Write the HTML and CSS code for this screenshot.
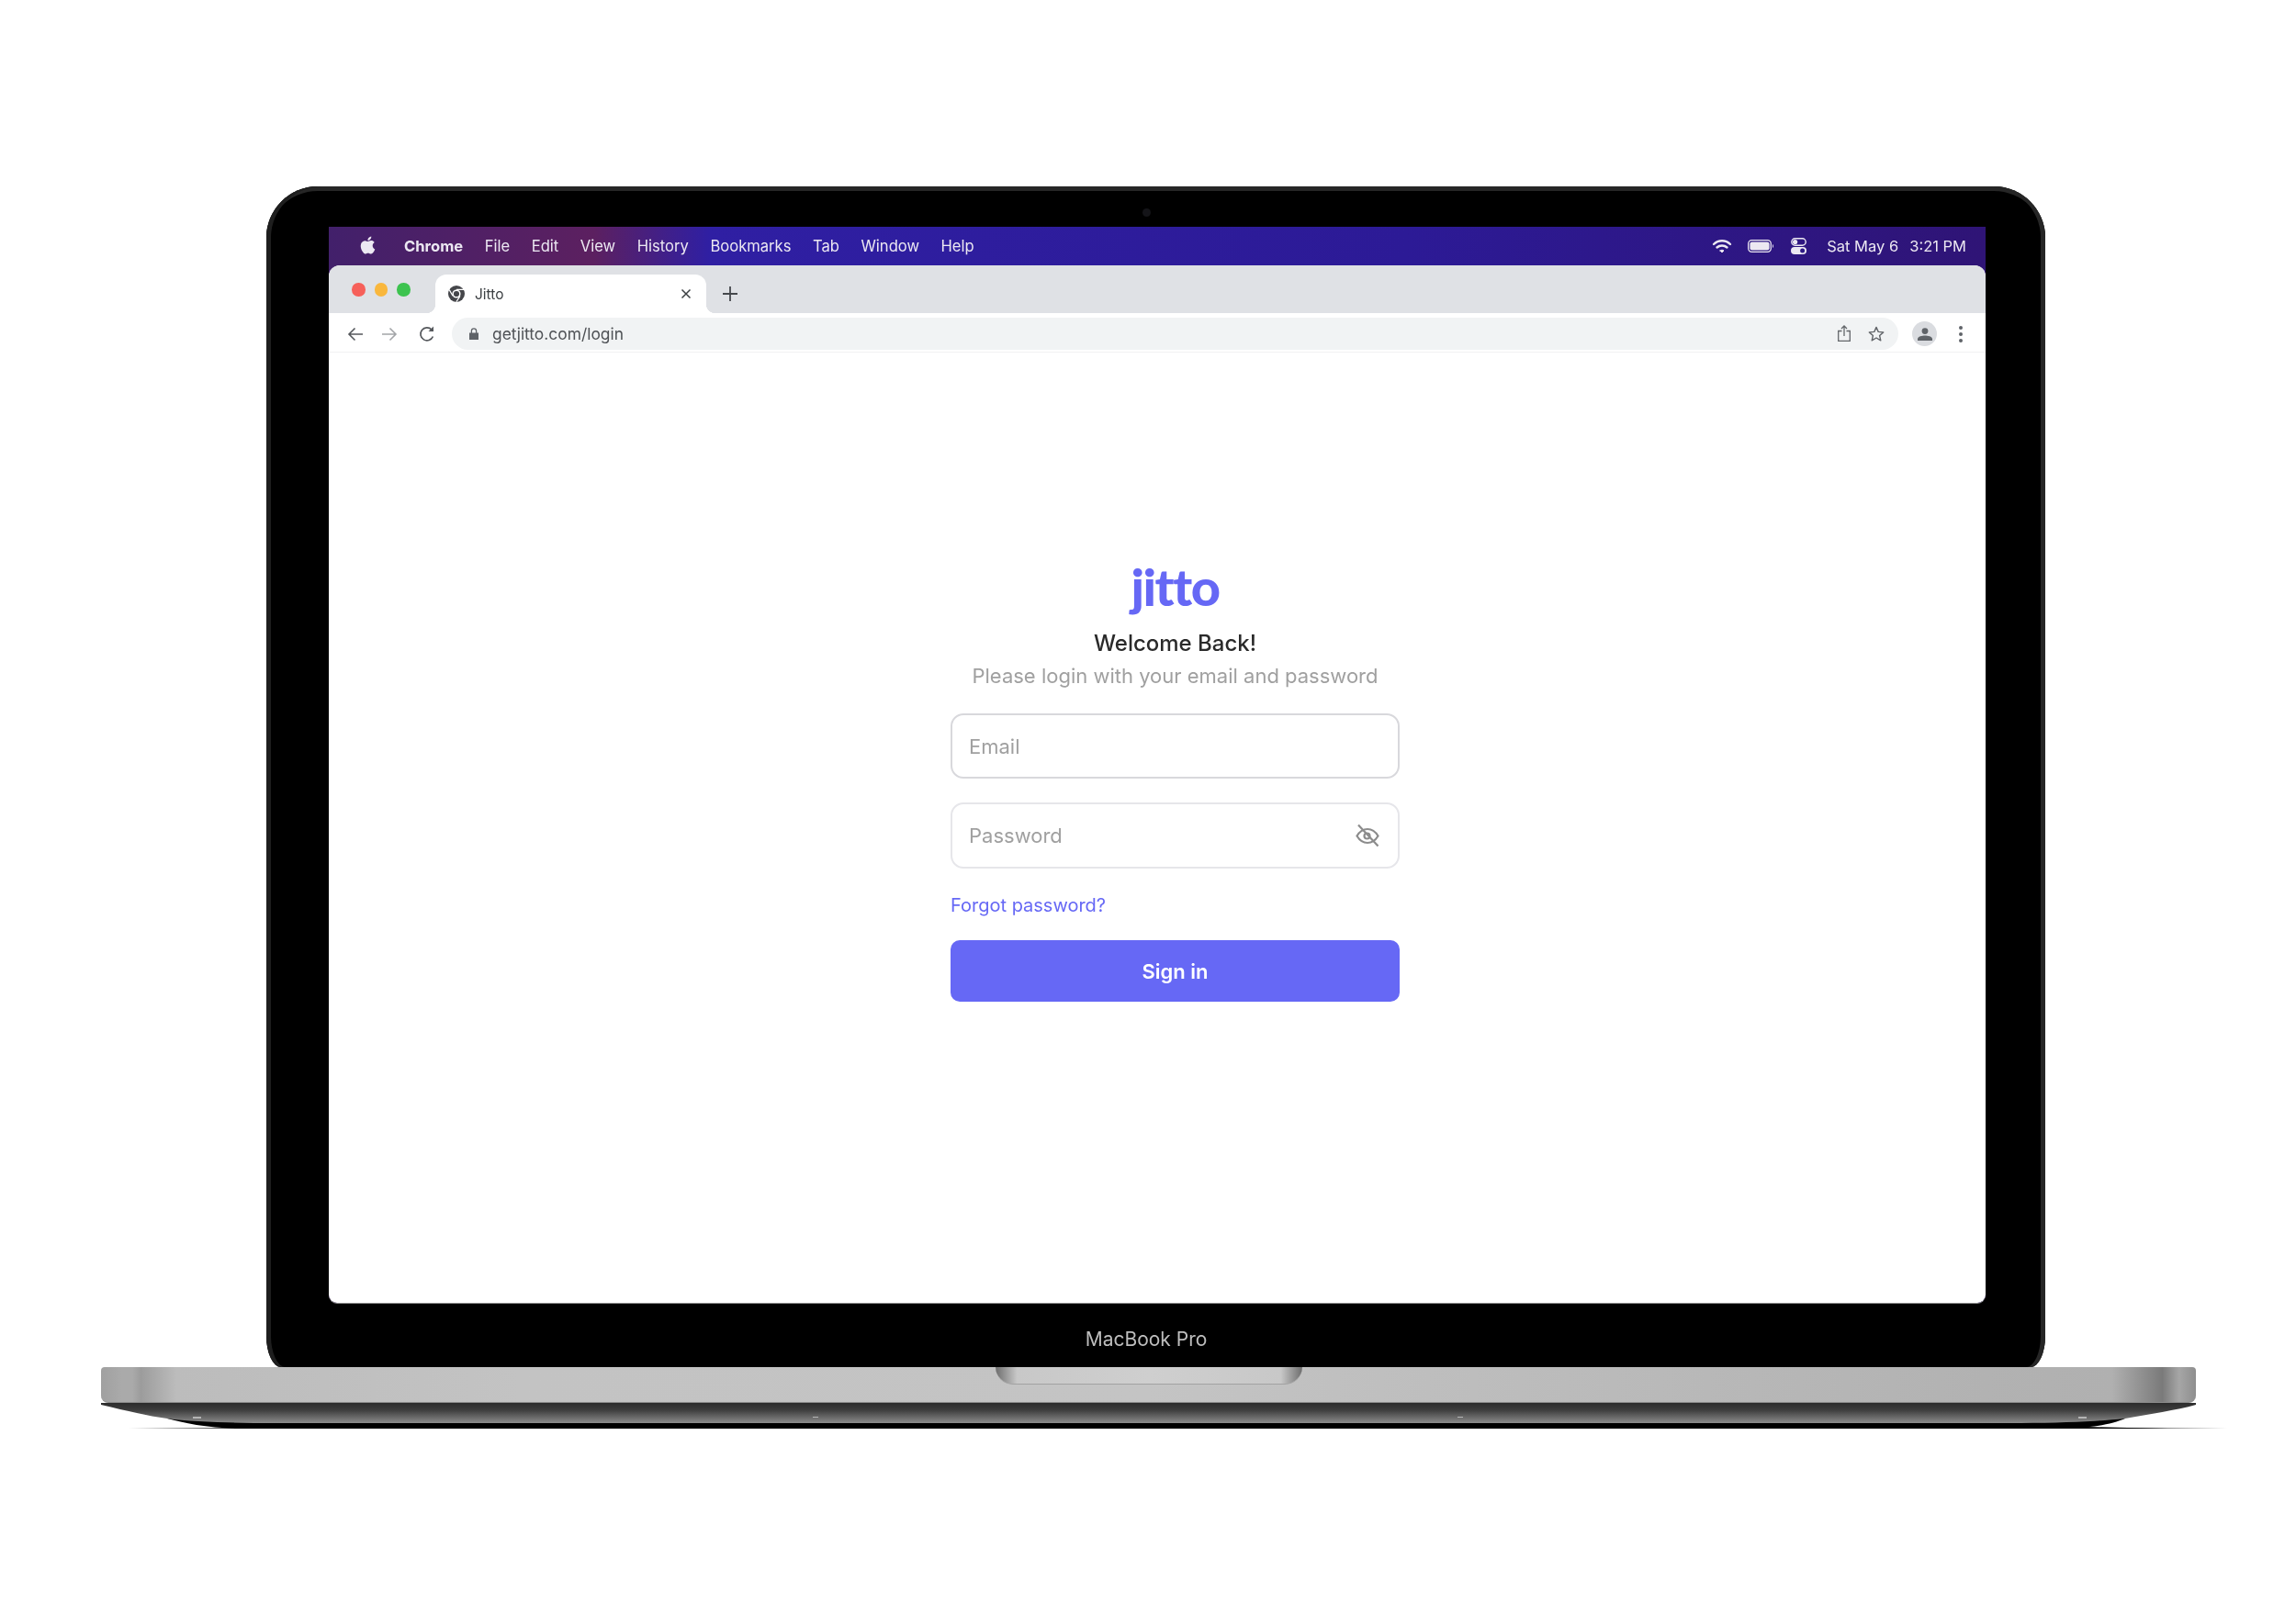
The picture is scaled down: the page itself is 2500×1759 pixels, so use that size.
FILE: index.html
```html
<!DOCTYPE html>
<html lang="en">

<head>
  <meta charset="UTF-8">
  <title>Jitto - MacBook Pro mockup</title>
  <link rel="stylesheet" href="styles.css">
</head>

<body>
  <div class="laptop">
    <div class="lid">
      <div class="camera"></div>
      <div class="screen">

        <!-- mac menu bar -->
        <div class="menubar">
          <svg class="apple" viewBox="0 0 24 24"><path d="M12.152 6.896c-.948 0-2.415-1.078-3.96-1.04-2.04.027-3.91 1.183-4.961 3.014-2.117 3.675-.546 9.103 1.519 12.09 1.013 1.454 2.208 3.09 3.792 3.039 1.52-.065 2.09-.987 3.935-.987 1.831 0 2.35.987 3.96.948 1.637-.026 2.676-1.48 3.676-2.948 1.156-1.688 1.636-3.325 1.662-3.415-.039-.013-3.182-1.221-3.22-4.857-.026-3.04 2.48-4.494 2.597-4.559-1.429-2.09-3.623-2.324-4.39-2.376-2-.156-3.675 1.09-4.61 1.09zM15.53 3.83c.843-1.012 1.4-2.427 1.245-3.83-1.207.052-2.662.805-3.532 1.818-.78.896-1.454 2.338-1.273 3.714 1.338.104 2.715-.688 3.559-1.701"/></svg>
          <ul class="menu">
            <li class="menu-app">Chrome</li>
            <li>File</li>
            <li>Edit</li>
            <li>View</li>
            <li>History</li>
            <li>Bookmarks</li>
            <li>Tab</li>
            <li>Window</li>
            <li>Help</li>
          </ul>
          <div class="status">
            <svg class="wifi" viewBox="0 0 22 17" fill="none" stroke="currentColor" stroke-width="2.4" stroke-linecap="round">
              <path d="M2 6 C7 1 15 1 20 6"/>
              <path d="M5.5 9.5 C8.5 6.8 13.5 6.8 16.5 9.5"/>
              <path d="M9 13 L11 15 L13 13 C12 12 10 12 9 13 Z" fill="currentColor" stroke-width="1"/>
            </svg>
            <svg class="battery" viewBox="0 0 29 14" fill="none">
              <rect x="0.7" y="0.7" width="24.6" height="12.6" rx="3.8" stroke="currentColor" stroke-width="1.3"/>
              <rect x="2.4" y="2.4" width="21.2" height="9.2" rx="2.4" fill="currentColor"/>
              <path d="M27 5 C28.4 5.5 28.4 8.5 27 9 Z" fill="currentColor"/>
            </svg>
            <svg class="control" viewBox="0 0 17 18" fill="none">
              <rect x="0.8" y="0.8" width="15.4" height="7.4" rx="3.7" stroke="currentColor" stroke-width="1.4"/>
              <circle cx="4.6" cy="4.5" r="2.6" fill="currentColor"/>
              <rect y="10" width="17" height="8" rx="4" fill="currentColor"/>
              <circle cx="12.6" cy="14" r="2.5" fill="#2e1a86"/>
            </svg>
            <span class="clock-date">Sat May 6</span>
            <span>3:21 PM</span>
          </div>
        </div>

        <div class="browser">
          <!-- tabs -->
          <div class="tabstrip">
            <div class="traffic">
              <span class="light light-red"></span>
              <span class="light light-yellow"></span>
              <span class="light light-green"></span>
            </div>
            <div class="tab">
              <svg class="favicon" viewBox="0 0 18 18">
                <circle cx="9" cy="9" r="9" fill="#45464a"/>
                <circle cx="9" cy="9" r="4.6" fill="#fff"/>
                <circle cx="9" cy="9" r="3.1" fill="#45464a"/>
                <path d="M9 4.4 H17 M5 11.3 L1.2 4.6 M13 11.3 L8.8 17.8" stroke="#fff" stroke-width="1.2"/>
              </svg>
              <span class="tab-title">Jitto</span>
              <svg class="tab-close" viewBox="0 0 12 12" fill="none" stroke="#3c4043" stroke-width="1.5"><path d="M1.5 1.5 L10.5 10.5 M10.5 1.5 L1.5 10.5"/></svg>
            </div>
            <svg class="new-tab" viewBox="0 0 16 16" fill="none" stroke="#44474b" stroke-width="1.8"><path d="M8 0 V16 M0 8 H16"/></svg>
          </div>

          <!-- address bar -->
          <div class="toolbar">
            <svg class="nav-icon" viewBox="0 0 17 16" fill="none" stroke="#55585c" stroke-width="1.6"><path d="M17 8 H2 M8.5 1.5 L2 8 L8.5 14.5"/></svg>
            <svg class="nav-icon nav-forward" viewBox="0 0 17 16" fill="none" stroke="#a3a5a8" stroke-width="1.6"><path d="M0 8 H15 M8.5 1.5 L15 8 L8.5 14.5"/></svg>
            <svg class="nav-icon nav-reload" viewBox="0 0 18 18" fill="none" stroke="#55585c" stroke-width="1.7"><path d="M15.4 11.5 A7 7 0 1 1 14 4"/><path d="M16 0.5 V6 H10.5 Z" fill="#55585c" stroke="none"/></svg>
            <div class="omnibox">
              <svg class="lock" viewBox="0 0 10 13"><path d="M0 5.5 H10 V13 H0 Z" fill="#5f6368"/><path d="M2.4 6 V3.4 A2.6 2.6 0 0 1 7.6 3.4 V6" fill="none" stroke="#5f6368" stroke-width="1.3"/></svg>
              <span class="url">getjitto.com/login</span>
              <svg class="share" viewBox="0 0 14 18" fill="none" stroke="#63666a" stroke-width="1.3"><path d="M4.5 6.5 H0.7 V17.3 H13.3 V6.5 H9.5"/><path d="M7 12 V1.2 M4 4 L7 1 L10 4"/></svg>
              <svg class="star" viewBox="0 0 18 17" fill="none" stroke="#63666a" stroke-width="1.4" stroke-linejoin="round"><path d="M9 1.4 L11.2 6.4 L16.7 6.9 L12.6 10.5 L13.8 15.8 L9 13 L4.2 15.8 L5.4 10.5 L1.3 6.9 L6.8 6.4 Z"/></svg>
            </div>
            <div class="avatar">
              <svg viewBox="0 0 16 14" fill="#5f6368"><circle cx="8" cy="3.6" r="3.4"/><path d="M0 14 V12 C0 9.4 5 8.4 8 8.4 C11 8.4 16 9.4 16 12 V14 Z"/></svg>
            </div>
            <div class="kebab"><span></span><span></span><span></span></div>
          </div>

          <!-- the actual login page -->
          <form class="page">
            <div class="login">
              <div class="logo">jitto</div>
              <h1 class="welcome">Welcome Back!</h1>
              <p class="subtitle">Please login with your email and password</p>
              <div class="field field-email">
                <input type="text" placeholder="Email">
              </div>
              <div class="field field-password">
                <input type="password" placeholder="Password">
                <svg class="eye" viewBox="0 0 26 26" fill="none" stroke="#8c8c8c" stroke-width="2.2">
                  <path d="M1.5 13.5 C4.5 8.5 8.5 6 13 6 C17.5 6 21.5 8.5 24.5 13.5 C21.5 18.5 17.5 21 13 21 C8.5 21 4.5 18.5 1.5 13.5 Z"/>
                  <circle cx="12.5" cy="13.5" r="3"/>
                  <path d="M3 1.5 L24.5 24.5"/>
                </svg>
              </div>
              <a class="forgot" href="#">Forgot password?</a>
              <button class="signin" type="button">Sign in</button>
            </div>
          </form>
        </div>
      </div>
      <div class="model">MacBook Pro</div>
    </div>

    <div class="base">
      <div class="deck">
        <div class="notch"></div>
      </div>
      <svg class="underside" viewBox="0 0 2330 30" width="2330" height="30">
        <defs>
          <linearGradient id="under" x1="0" y1="0" x2="0" y2="1">
            <stop offset="0" stop-color="#2b2b2b"/>
            <stop offset="0.35" stop-color="#3d3d3d"/>
            <stop offset="1" stop-color="#8c8c8c"/>
          </linearGradient>
          <linearGradient id="floor" x1="0" y1="0" x2="1" y2="0">
            <stop offset="0" stop-color="#000" stop-opacity="0"/>
            <stop offset="0.05" stop-color="#000" stop-opacity="0.8"/>
            <stop offset="0.95" stop-color="#000" stop-opacity="0.8"/>
            <stop offset="1" stop-color="#000" stop-opacity="0"/>
          </linearGradient>
        </defs>
        <rect x="30" y="27" width="2285" height="1" fill="url(#floor)"/>
        <path d="M72 17 C90 22 115 27 150 28 L2135 28 C2170 27 2190 23 2204 17 Z" fill="#000"/>
        <path d="M2120 25 L2250 28 H2120 Z" fill="#000"/>
        <path d="M0 2 C30 9 50 14 72 17 C100 21 150 22 190 22 L2090 22 C2140 22 2175 20 2204 17 C2230 12 2260 8 2281 2 V0 H0 Z" fill="url(#under)"/>
        <rect x="100" y="15" width="9" height="2" fill="#b5b5b5"/>
        <rect x="775" y="15" width="6" height="1" fill="#b5b5b5"/>
        <rect x="1477" y="15" width="6" height="1" fill="#b5b5b5"/>
        <rect x="2153" y="15" width="9" height="2" fill="#b5b5b5"/>
      </svg>
    </div>
  </div>
</body>

</html>
```

FILE: styles.css
```css
* {
  box-sizing: border-box;
  margin: 0;
  padding: 0;
}

html,
body {
  background: #fff;
}

body {
  font-family: 'Inter', 'Liberation Sans', sans-serif;
}

/* the reference is a slightly soft mockup render */
.laptop {
  width: 2281px;
  margin-left: 110px;
  padding-top: 203px;
  filter: blur(0.5px);
}

/* screen lid ----------------------------------- */
.lid {
  position: relative;
  width: 1937px;
  height: 1286px;
  margin-left: 180px;
  padding: 44px 65px 0 68px;
  background: #000;
  border-radius: 56px 56px 16px 16px / 56px 56px 34px 34px;
  box-shadow: inset 5px 0 0 #1e1e1e, inset -5px 0 0 #262626, inset 0 5px 0 #262626;
}

.camera {
  position: absolute;
  top: 24px;
  left: 954px;
  width: 9px;
  height: 9px;
  border-radius: 50%;
  background: #141418;
}

.screen {
  display: flex;
  flex-direction: column;
  width: 1804px;
  height: 1172px;
  border-radius: 0 0 9px 9px;
  background: linear-gradient(90deg, #42206b 0, #5c2060 16%, #2f1fa3 23%, #2c1a96 65%, #2f1476 100%);
  box-shadow: 0 1px 0 #8a8a8a;
}

/* menu bar ----------------------------------- */
.menubar {
  display: flex;
  align-items: center;
  height: 42px;
  padding: 0 21px 0 33px;
  color: #ece8f2;
  font-size: 16.5px;
}

.apple {
  width: 19px;
  height: 20px;
  margin-top: -2px;
  fill: #ece8f2;
}

.menu {
  display: flex;
  gap: 23.5px;
  margin-left: 30px;
  font-size: 16.6px;
  list-style: none;
}

.menu-app {
  font-weight: 700;
}

.status {
  display: flex;
  align-items: center;
  margin-left: auto;
}

.wifi {
  width: 22px;
  height: 17px;
}

.battery {
  width: 29px;
  height: 14px;
  margin-left: 17px;
}

.control {
  width: 17px;
  height: 18px;
  margin-left: 18px;
}

.clock-date {
  margin: 0 12px 0 22px;
}

/* browser window ----------------------------------- */
.browser {
  display: flex;
  flex: 1;
  flex-direction: column;
  overflow: hidden;
  background: #fff;
  border-radius: 12px 12px 9px 9px;
}

.tabstrip {
  display: flex;
  height: 52px;
  padding-top: 10px;
  background: #dfe1e5;
}

.traffic {
  display: flex;
  gap: 10px;
  width: 116px;
  padding: 0 0 0 25px;
  margin-top: 9px;
}

.light {
  width: 14.5px;
  height: 14.5px;
  margin-top: 0;
  border-radius: 50%;
}

.light-red {
  background: #f6605a;
}

.light-yellow {
  background: #f9b73d;
}

.light-green {
  background: #3dc34f;
}

.tab {
  position: relative;
  display: flex;
  align-items: center;
  width: 295px;
  height: 42px;
  padding: 0 16px 0 14px;
  background: #fff;
  border-radius: 12px 12px 0 0;
}

.tab::before,
.tab::after {
  content: '';
  position: absolute;
  bottom: 0;
  width: 10px;
  height: 10px;
}

.tab::before {
  left: -10px;
  background: radial-gradient(circle at 0 0, #dfe1e5 10px, #fff 10.5px);
}

.tab::after {
  right: -10px;
  background: radial-gradient(circle at 100% 0, #dfe1e5 10px, #fff 10.5px);
}

.favicon {
  width: 18px;
  height: 18px;
}

.tab-title {
  margin-left: 11px;
  color: #3c4043;
  font-size: 15.5px;
}

.tab-close {
  width: 12px;
  height: 12px;
  margin-left: auto;
}

.new-tab {
  width: 16px;
  height: 16px;
  margin: 13px 0 0 18px;
}

.toolbar {
  display: flex;
  align-items: center;
  height: 43px;
  padding: 3px 0 0 20px;
  border-bottom: 1px solid #f1f1f3;
}

.nav-icon {
  width: 17px;
  height: 16px;
}

.nav-forward {
  margin-left: 21px;
}

.nav-reload {
  width: 18px;
  height: 18px;
  margin-left: 23px;
}

.omnibox {
  display: flex;
  align-items: center;
  width: 1575px;
  height: 35px;
  margin-left: 18px;
  padding: 0 15px 0 19px;
  background: #f1f3f4;
  border-radius: 18px;
}

.lock {
  width: 10px;
  height: 13px;
}

.url {
  margin-left: 15px;
  color: #4f5256;
  font-size: 17.4px;
}

.share {
  width: 14px;
  height: 18px;
  margin-left: auto;
  margin-top: -2px;
}

.star {
  width: 18px;
  height: 17px;
  margin-left: 19px;
}

.avatar {
  display: flex;
  align-items: center;
  justify-content: center;
  width: 27px;
  height: 27px;
  margin-left: 15px;
  background: #dadce0;
  border-radius: 50%;
}

.avatar svg {
  width: 16px;
  height: 14px;
}

.kebab {
  display: flex;
  flex-direction: column;
  gap: 3px;
  margin-left: 24px;
}

.kebab span {
  width: 4px;
  height: 4px;
  background: #5f6368;
  border-radius: 50%;
}

/* login form ----------------------------------- */
.page {
  flex: 1;
  padding: 223px 0 0 677px;
}

.login {
  display: flex;
  flex-direction: column;
  width: 489px;
}

.logo {
  height: 69px;
  color: #6668f5;
  font-family: 'Lato', sans-serif;
  font-size: 56px;
  font-weight: 900;
  letter-spacing: -1.5px;
  line-height: 64px;
  text-align: center;
}

.welcome {
  margin-top: 8px;
  color: #2a2a2a;
  font-size: 24px;
  font-weight: 500;
  line-height: 34px;
  text-align: center;
}

.subtitle {
  margin-top: 2px;
  color: #a0a0a0;
  font-size: 22px;
  line-height: 32px;
  text-align: center;
}

.field {
  display: flex;
  align-items: center;
  padding: 0 20px 0 18px;
  background: #fff;
  border-radius: 14px;
}

.field input {
  flex: 1;
  width: 100%;
  border: 0;
  outline: 0;
  background: transparent;
  color: #222;
  font-family: inherit;
  font-size: 22px;
}

.field input::placeholder {
  color: #a0a0a0;
  opacity: 1;
}

.field-email {
  height: 71px;
  margin-top: 25px;
  border: 2px solid #d8d8dc;
}

.field-password {
  height: 72px;
  margin-top: 26px;
  border: 2px solid #e6e6ea;
}

.eye {
  flex: none;
  width: 26px;
  height: 26px;
}

.forgot {
  margin-top: 25px;
  color: #6668f5;
  font-size: 20px;
  line-height: 30px;
  text-decoration: none;
}

.signin {
  height: 67px;
  margin-top: 23px;
  border: 0;
  border-radius: 10px;
  background: #6668f5;
  color: #fff;
  font-family: inherit;
  font-size: 22px;
  font-weight: 600;
}

.model {
  margin: 25px 24px 0 0;
  color: #bdbdbd;
  font-size: 21px;
  line-height: 30px;
  text-align: center;
}

/* base ----------------------------------- */
.base {
  position: relative;
}

.deck {
  display: flex;
  justify-content: center;
  height: 39px;
  border-radius: 4px 4px 8px 8px;
  border-bottom: 1px solid #8a8a8a;
  background: linear-gradient(90deg, #a0a0a0 0, #aaa 1%, #aaa 1.5%, #9c9c9c 1.9%, #bcbcbc 3.6%, #c3c3c3 20%, #c4c4c4 50%, #b2b2b2 90%, #b0b0b0 96%, #7a7a7a 98.4%, #a6a6a6 99.2%, #8e8e8e 100%);
}

.notch {
  width: 334px;
  height: 19px;
  border-radius: 0 0 22px 22px;
  border-bottom: 1px solid #a2a2a2;
  background: linear-gradient(90deg, #6d6d6d 0, #c8c8c8 7%, #cfcfcf 50%, #c8c8c8 93%, #6d6d6d 100%);
}

.underside {
  display: block;
}
```
